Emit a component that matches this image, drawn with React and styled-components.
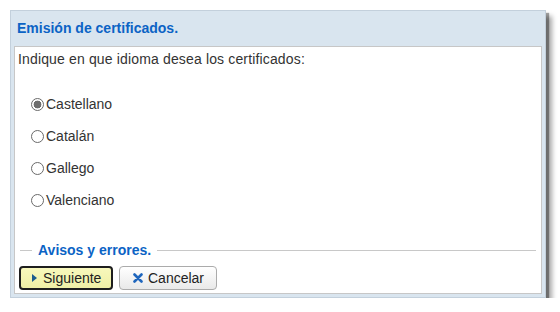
import React from "react";
import styled, { createGlobalStyle } from "styled-components";

const Global = createGlobalStyle`
  html, body { margin: 0; padding: 0; background: #ffffff; }
  body { font-family: "Liberation Sans", Arial, sans-serif; }
  * { box-sizing: border-box; }
`;

const Page = styled.div`
  padding: 10px 0 0 10px;
`;

const Dialog = styled.section`
  width: 536px;
  height: 288px;
  display: flex;
  flex-direction: column;
  background: #d9e5ef;
  border: 1px solid #c3d0dc;
  padding: 0 3px 3px 3px;
  box-shadow: 3px 3px 1px rgba(0, 0, 0, 0.35), 6px 6px 5px rgba(0, 0, 0, 0.35);
`;

const Header = styled.header`
  height: 35px;
  padding: 9px 0 0 3px;
`;

const Title = styled.h1`
  margin: 0;
  font-size: 14px;
  line-height: 16px;
  font-weight: bold;
  color: #0b63c5;
`;

const Body = styled.div`
  flex: 1;
  display: flex;
  flex-direction: column;
  background: #ffffff;
  border: 1px solid #c7c7c7;
  padding: 4px 0 3px 0;
  color: #333333;
  font-size: 14px;
  line-height: 16px;
`;

const Prompt = styled.p`
  margin: 0;
  padding-left: 3px;
  letter-spacing: 0.15px;
`;

const Options = styled.div`
  display: flex;
  flex-direction: column;
  padding-top: 21px;
`;

const Option = styled.label`
  display: flex;
  align-items: center;
  height: 32px;
  padding-left: 16px;
  cursor: pointer;
`;

const Radio = styled.input.attrs({ type: "radio" })`
  appearance: none;
  width: 13px;
  height: 13px;
  margin: 0 2px 0 0;
  border-radius: 50%;
  border: 1px solid #6a6a6a;
  background: #ffffff;
  &:checked {
    background: radial-gradient(circle, #6e6e6e 0 3.6px, #ffffff 4.2px);
  }
`;

const Divider = styled.div`
  margin: auto 5px 8px 5px;
  height: 16px;
  display: flex;
  align-items: center;
  gap: 6px;
  color: #0b63c5;
  font-weight: bold;
  &::before {
    content: "";
    width: 12px;
    border-top: 1px solid #c8c8c8;
  }
  &::after {
    content: "";
    flex: 1;
    border-top: 1px solid #c8c8c8;
  }
`;

const Actions = styled.div`
  display: flex;
  gap: 6px;
  padding-left: 4px;
`;

const Button = styled.button`
  height: 24px;
  display: flex;
  align-items: center;
  gap: ${(p) => (p.$primary ? "6px" : "5px")};
  font-family: "Liberation Sans", Arial, sans-serif;
  font-size: 14px;
  color: #222222;
  border-radius: 4px;
  cursor: pointer;
  ${(p) =>
    p.$primary
      ? `
    width: 94px;
    padding: 0 0 0 11px;
    border: 2px solid #1e1e1e;
    background: linear-gradient(#f8f8bc, #efefa6);
  `
      : `
    width: 98px;
    padding: 0 0 0 13px;
    border: 1px solid #ababab;
    background: linear-gradient(#ffffff, #e9e9e9);
  `}
`;

const Play = () => (
  <svg width="5" height="8" viewBox="0 0 5 8">
    <path d="M0 0 L5 4 L0 8 Z" fill="#1b5c8e" />
  </svg>
);

const Cross = () => (
  <svg width="10" height="10" viewBox="0 0 10 10">
    <path
      d="M1.5 1.5 L8.5 8.5 M8.5 1.5 L1.5 8.5"
      stroke="#1f66bd"
      strokeWidth="2.6"
      strokeLinecap="round"
    />
  </svg>
);

const languages = ["Castellano", "Catalán", "Gallego", "Valenciano"];

export default function App() {
  return (
    <Page>
      <Global />
      <Dialog>
        <Header>
          <Title>Emisión de certificados.</Title>
        </Header>
        <Body>
          <Prompt>Indique en que idioma desea los certificados:</Prompt>
          <Options>
            {languages.map((l, i) => (
              <Option key={l}>
                <Radio name="idioma" defaultChecked={i === 0} />
                {l}
              </Option>
            ))}
          </Options>
          <Divider>Avisos y errores.</Divider>
          <Actions>
            <Button $primary>
              <Play />
              Siguiente
            </Button>
            <Button>
              <Cross />
              Cancelar
            </Button>
          </Actions>
        </Body>
      </Dialog>
    </Page>
  );
}
